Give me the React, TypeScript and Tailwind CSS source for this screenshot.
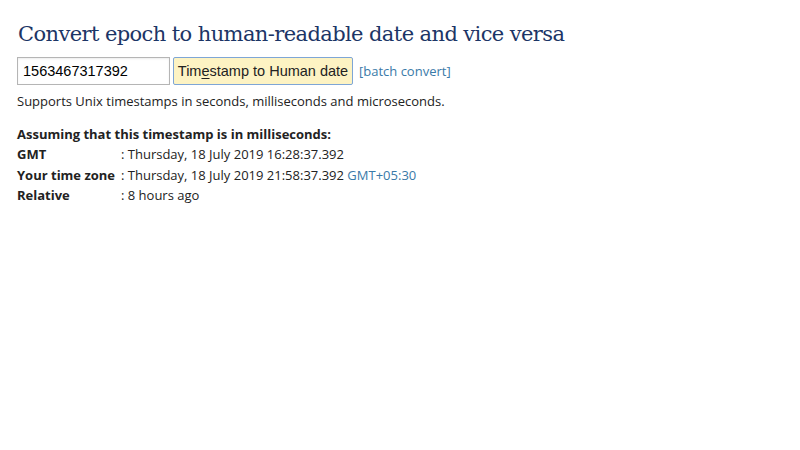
export default function App() {
  return (
    <div className="w-[800px] h-[450px] bg-white text-[#222] font-['Open_Sans',sans-serif] text-[13px] leading-[20.5px]">
      <div className="pl-[17px] pt-[19px]">
        <h1 className="font-['DejaVu_Serif',serif] text-[21px] leading-[30px] text-[#1c3566] pl-px tracking-[-0.6px]">
          Convert epoch to human-readable date and vice versa
        </h1>
        <div className="flex items-center mt-[8px] h-[28px]">
          <input
            defaultValue="1563467317392"
            className="w-[153px] h-[28px] border border-[#b5b5b5] px-[5px] font-['Liberation_Sans',sans-serif] text-[14.5px] text-black shadow-[inset_0_1px_2px_rgba(0,0,0,0.08)] outline-none"
          />
          <button className="ml-[3px] w-[180px] h-[28px] border border-[#7ea6d6] bg-[#fdf3c3] rounded-[2px] font-['Liberation_Sans',sans-serif] text-[14.5px] text-[#222]">
            Tim<span className="underline underline-offset-2">e</span>stamp to Human date
          </button>
          <a className="ml-[6px] text-[#3a7aa8]">[batch convert]</a>
        </div>
        <p className="mt-[6px]">Supports Unix timestamps in seconds, milliseconds and microseconds.</p>
        <div className="mt-[12px]">
          <div className="font-bold">Assuming that this timestamp is in milliseconds:</div>
          <div className="flex">
            <span className="w-[104px] font-bold whitespace-nowrap">GMT</span>
            <span>: Thursday, 18 July 2019 16:28:37.392</span>
          </div>
          <div className="flex">
            <span className="w-[104px] font-bold whitespace-nowrap">Your time zone</span>
            <span>
              : Thursday, 18 July 2019 21:58:37.392 <span className="text-[#3a7aa8]">GMT+05:30</span>
            </span>
          </div>
          <div className="flex">
            <span className="w-[104px] font-bold whitespace-nowrap">Relative</span>
            <span>: 8 hours ago</span>
          </div>
        </div>
      </div>
    </div>
  );
}
